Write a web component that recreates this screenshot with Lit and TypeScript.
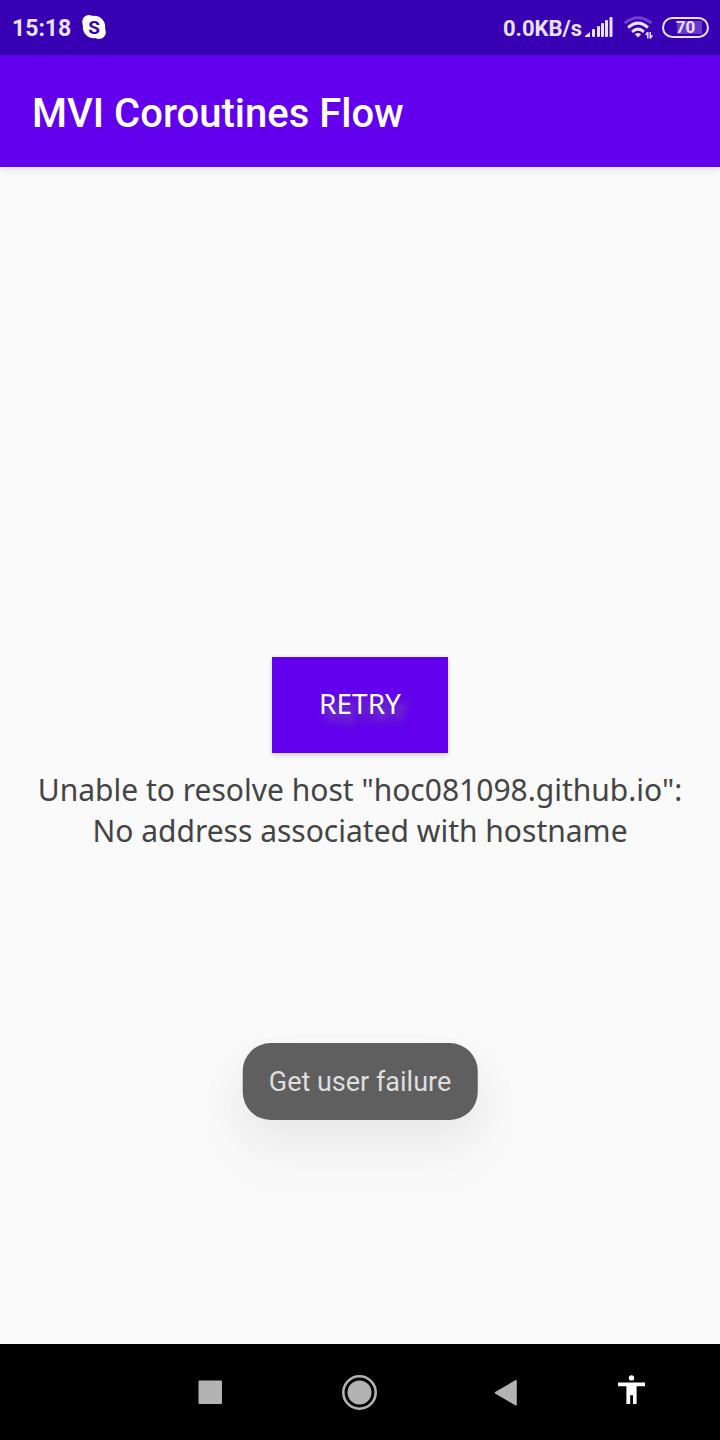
import { LitElement, html, css } from "lit";
import { customElement, property } from "lit/decorators.js";

@customElement("status-bar")
class StatusBar extends LitElement {
  @property() time = "";
  @property() speed = "";
  @property({ type: Number }) battery = 0;

  static styles = css`
    :host {
      display: flex;
      align-items: center;
      justify-content: space-between;
      height: 55px;
      padding: 0 11px 0 12px;
      background: #3700b3;
      color: #e9e0fb;
      font: 700 23px/28px Roboto, sans-serif;
    }
    .group {
      display: flex;
      align-items: center;
    }
    .label {
      padding-top: 2px;
    }
    .speed {
      font-size: 22px;
    }
    svg {
      display: block;
    }
    .skype {
      margin-left: 11px;
    }
    .skype-letter {
      font: 700 19px Roboto, sans-serif;
      fill: #3700b3;
    }
    .signal {
      margin-left: 3px;
    }
    .wifi {
      margin-left: 10px;
    }
    .battery {
      display: grid;
      place-items: center;
      box-sizing: border-box;
      width: 47px;
      height: 21px;
      margin-left: 9px;
      border: 2px solid #e9e0fb;
      border-radius: 11px;
      background: linear-gradient(#6a38c8, #6a38c8) 13px center / 25px 13px no-repeat;
      font-size: 17px;
      line-height: 17px;
    }
  `;

  render() {
    return html`
      <div class="group">
        <span class="label">${this.time}</span>
        <svg class="skype" width="24" height="26" viewBox="0 0 24 26" aria-label="Skype">
          <circle cx="12" cy="12" r="11.2" fill="#fff" />
          <circle cx="7" cy="7" r="6.9" fill="#fff" />
          <circle cx="17" cy="17" r="6.9" fill="#fff" />
          <text class="skype-letter" x="12" y="19" text-anchor="middle">S</text>
        </svg>
      </div>
      <div class="group">
        <span class="label speed">${this.speed}</span>
        <svg class="signal" width="29" height="24" viewBox="0 0 29 24" fill="#e9e0fb" aria-hidden="true">
          <path d="M0 21V20L5 16V21Z" />
          <rect x="7" y="13" width="3" height="8" rx="1" />
          <rect x="12" y="10" width="3" height="11" rx="1" />
          <rect x="16" y="7" width="3" height="14" rx="1" />
          <rect x="20" y="4" width="3" height="17" rx="1" />
          <rect x="24.5" y="1" width="3" height="20" rx="1" />
        </svg>
        <svg class="wifi" width="29" height="23" viewBox="0 0 29 23" fill="none" stroke="#e9e0fb" stroke-width="3" aria-hidden="true">
          <path d="M0.5 7.2Q14 -3.8 27.5 7.2" stroke="#6f40cb" />
          <path d="M4.1 11.6Q14 2.6 23.9 11.6" />
          <path d="M8.1 15.8Q14 10.4 19.9 15.8" />
          <path d="M14 21.6L10.9 18.2Q14 15.6 17.1 18.2Z" fill="#e9e0fb" stroke="none" />
          <path d="M23.8 16V22.6M26.2 16V22.6" stroke-width="1.5" />
          <path d="M21.7 19.2L23.5 16.4M28.3 19.2L26.5 22.4" stroke-width="1.5" />
        </svg>
        <span class="battery">${this.battery}</span>
      </div>
    `;
  }
}

@customElement("nav-bar")
class NavBar extends LitElement {
  static styles = css`
    :host {
      display: grid;
      grid-template-columns: 135fr 150fr 150fr 142fr 108fr 35fr;
      height: 96px;
      background: #000;
    }
    button {
      display: grid;
      place-items: center;
      padding: 0;
      border: 0;
      background: none;
      cursor: pointer;
    }
    button:first-child {
      grid-column: 2;
    }
    svg {
      display: block;
    }
  `;

  render() {
    return html`
      <button aria-label="Recent apps">
        <svg width="36" height="36" viewBox="0 0 36 36"><rect x="6.5" y="6.5" width="23.5" height="23.5" rx="1" fill="#b3b3b3" /></svg>
      </button>
      <button aria-label="Home">
        <svg width="36" height="36" viewBox="0 0 36 36">
          <circle cx="17.5" cy="18.5" r="16.2" fill="none" stroke="#b3b3b3" stroke-width="2.6" />
          <circle cx="17.5" cy="18.5" r="12" fill="#b3b3b3" />
        </svg>
      </button>
      <button aria-label="Back">
        <svg width="36" height="36" viewBox="0 0 36 36"><path d="M7.5 18.8L28 6.8V30.8Z" fill="#b3b3b3" stroke="#b3b3b3" stroke-width="1.6" stroke-linejoin="round" /></svg>
      </button>
      <button aria-label="Accessibility">
        <svg width="36" height="36" viewBox="0 0 36 36" fill="#fff">
          <circle cx="18.5" cy="3.9" r="2.7" />
          <path d="M5 8.4H32V12.2H23.6V30H20V21.2H17.2V30H13.4V12.2H5Z" />
        </svg>
      </button>
    `;
  }
}

@customElement("app-root")
class AppRoot extends LitElement {
  static styles = css`
    :host {
      display: flex;
      flex-direction: column;
      min-height: 100vh;
      background: #fafafa;
    }
    .app-bar {
      display: flex;
      align-items: center;
      height: 112px;
      padding: 0 32px;
      background: #6200ee;
      box-shadow: 0 2px 8px rgba(0, 0, 0, 0.12);
    }
    h1 {
      margin: 0;
      padding-top: 6px;
      color: #fff;
      font: 500 40px/48px Roboto, sans-serif;
    }
    main {
      position: relative;
      flex: 1;
      display: flex;
      flex-direction: column;
      align-items: center;
      justify-content: center;
      gap: 16px;
      padding: 0 32px 4px;
    }
    .retry {
      min-width: 176px;
      height: 96px;
      padding: 0 32px 4px;
      border: 0;
      background: #6200ee;
      box-shadow: 0 2px 5px rgba(0, 0, 0, 0.18);
      color: #fff;
      font: 400 28px/38px "Noto Sans", sans-serif;
      text-shadow: 6px 8px 10px rgba(127, 127, 127, 0.8);
      cursor: pointer;
    }
    .message {
      margin: 0;
      color: #444;
      font: 400 30px/41px "Noto Sans", sans-serif;
      text-align: center;
    }
    .toast {
      position: absolute;
      bottom: 224px;
      left: 50%;
      transform: translateX(-50%);
      padding: 23px 26px 22px;
      border-radius: 28px;
      background: #5f5f5f;
      box-shadow:
        0 20px 48px rgba(0, 0, 0, 0.07),
        0 34px 60px 30px rgba(0, 0, 0, 0.01);
      color: #dedede;
      font: 400 27px/32px Roboto, sans-serif;
      white-space: nowrap;
    }
  `;

  render() {
    return html`
      <status-bar time="15:18" speed="0.0KB/s" battery="70"></status-bar>
      <header class="app-bar"><h1>MVI Coroutines Flow</h1></header>
      <main>
        <button class="retry">RETRY</button>
        <p class="message">Unable to resolve host "hoc081098.github.io": No address associated with hostname</p>
        <div class="toast" role="status">Get user failure</div>
      </main>
      <nav-bar></nav-bar>
    `;
  }
}
